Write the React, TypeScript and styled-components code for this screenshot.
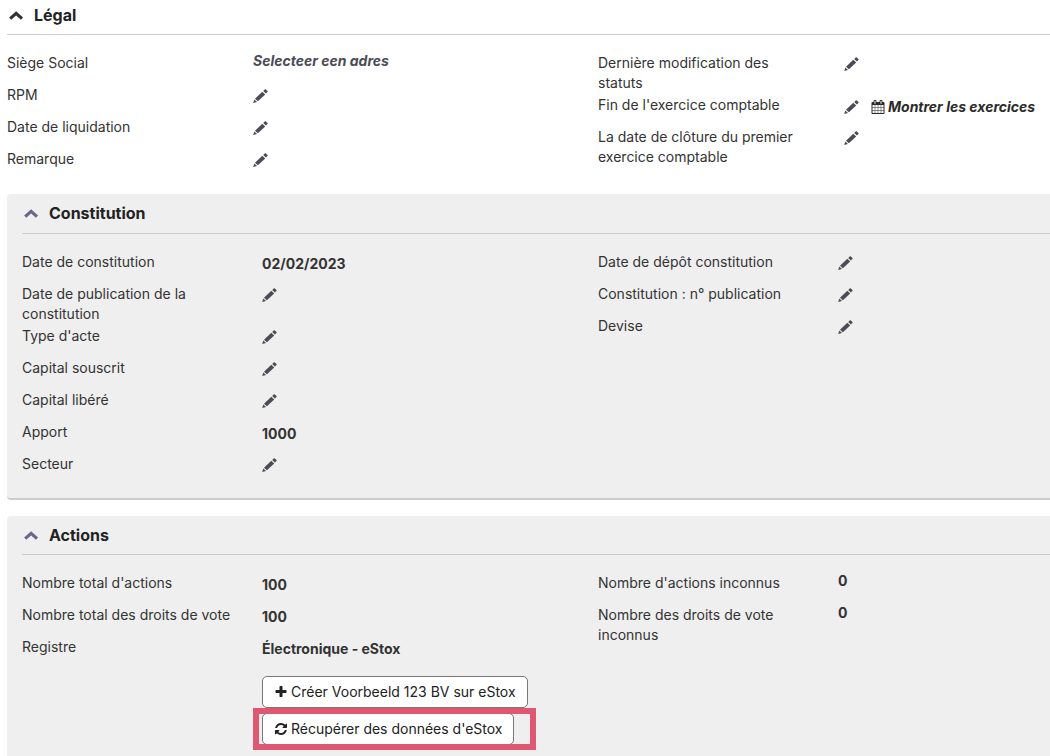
import React from "react";
import styled, { createGlobalStyle } from "styled-components";

const GlobalStyle = createGlobalStyle`
  * { box-sizing: border-box; }
  body {
    margin: 0;
    background: #fff;
    color: #333;
    font-family: Inter, "Liberation Sans", sans-serif;
    font-size: 14px;
    line-height: 20px;
  }
  button { font: inherit; color: inherit; cursor: pointer; }
`;

const Page = styled.main`
  display: flex;
  flex-direction: column;
  min-height: 100vh;
  padding-left: 7px;
  overflow-x: hidden;
`;

const LegalSection = styled.section`
  padding-bottom: 13px;
`;

const Panel = styled.section<{ $last?: boolean }>`
  padding: 0 0 12px 15px;
  background: #efefef;
  border-radius: 4px 0 0 4px;
  ${(p) =>
    p.$last
      ? "flex: 1; padding-bottom: 8px; border-bottom-left-radius: 0;"
      : "border-bottom: 2px solid #ccc; margin-bottom: 16px;"}
`;

const Header = styled.h2<{ $height: number; $plain?: boolean }>`
  display: flex;
  align-items: center;
  height: ${(p) => p.$height}px;
  margin: 0 0 18px;
  padding-bottom: ${(p) => (p.$plain ? 5 : 1)}px;
  border-bottom: 1px solid #ccc;
  font-size: 16px;
  font-weight: 700;
  line-height: 20px;
  color: #222;
`;

const Toggle = styled.button<{ $tone: string }>`
  display: flex;
  align-items: center;
  gap: 10px;
  padding: 0 1px;
  border: 0;
  background: none;
  svg { color: ${(p) => p.$tone}; }
`;

const Columns = styled.div<{ $left: number }>`
  display: grid;
  grid-template-columns: ${(p) => p.$left}fr 452fr;
`;

const Fields = styled.dl<{ $label: number }>`
  display: grid;
  grid-template-columns: ${(p) => p.$label}px 1fr;
  grid-auto-rows: min-content;
  margin: 0;
`;

const Label = styled.dt`
  min-height: 32px;
  padding: 0 30px 2px 0;
`;

const Value = styled.dd<{ $raised?: boolean }>`
  display: flex;
  flex-direction: column;
  align-items: flex-start;
  margin: 0;
  padding-top: ${(p) => (p.$raised ? 0 : 2)}px;
  line-height: ${(p) => (p.$raised ? 16 : 20)}px;
  font-weight: 700;
  white-space: nowrap;
`;

const Inline = styled.div`
  display: flex;
  align-items: center;
  gap: 12px;
`;

const EditButton = styled.button`
  display: flex;
  align-items: center;
  height: 18px;
  padding: 0;
  border: 0;
  background: none;
  color: #4b4c55;
`;

const TextLink = styled.a<{ $muted?: boolean }>`
  display: flex;
  align-items: center;
  gap: 3px;
  color: ${(p) => (p.$muted ? "#4b4c55" : "#2b2b2b")};
  font-style: italic;
  font-weight: 700;
  text-decoration: none;
`;

const Actions = styled.div`
  display: flex;
  flex-direction: column;
  align-items: flex-start;
  gap: 5px;
  margin-top: 17px;
`;

const ActionButton = styled.button`
  display: flex;
  align-items: center;
  gap: 3px;
  height: 32px;
  padding: 0 11px;
  border: 1px solid #777;
  border-radius: 5px;
  background: #fff;
  color: #222;
  font-weight: 400;
  white-space: nowrap;
`;

const Highlight = styled.div`
  position: relative;
  &::after {
    content: "";
    position: absolute;
    inset: -5px -22px -5px -9px;
    border: 6px solid #dd5870;
    pointer-events: none;
  }
`;

const Chevron = () => (
  <svg width="16" height="12" viewBox="0 0 16 12" aria-hidden="true">
    <path d="M2.200 9.600 8.100 4.300l5.900 5.300" fill="none" stroke="currentColor" strokeWidth="3.200" />
  </svg>
);

const Pencil = () => (
  <svg width="15" height="14" viewBox="0 0 15 14" fill="currentColor" aria-hidden="true">
    <path d="M.2 13.900 1.300 10.500 4 13ZM2 9.700 9.300 2.800 12.200 5.400 4.900 12.300ZM10.200 2 11.700.500Q12.300 0 12.900.500L14.400 1.900Q15 2.500 14.400 3.100L12.900 4.500Z" />
  </svg>
);

const glyphs = {
  plus: "M1600 736v192q0 40-28 68t-68 28h-416v416q0 40-28 68t-68 28h-192q-40 0-68-28t-28-68v-416h-416q-40 0-68-28t-28-68v-192q0-40 28-68t68-28h416v-416q0-40 28-68t68-28h192q40 0 68 28t28 68v416h416q40 0 68 28t28 68z",
  refresh:
    "M1639 1056q0 5-1 7-64 268-268 434.5t-478 166.5q-146 0-282.5-55t-243.5-157l-129 129q-19 19-45 19t-45-19-19-45v-448q0-26 19-45t45-19h448q26 0 45 19t19 45-19 45l-137 137q71 66 161 102t187 36q134 0 250-65t186-179q11-17 53-117 8-23 30-23h192q13 0 22.5 9.5t9.5 22.5zm25-800v448q0 26-19 45t-45 19h-448q-26 0-45-19t-19-45 19-45l138-138q-148-137-349-137-134 0-250 65t-186 179q-11 17-53 117-8 23-30 23h-199q-13 0-22.5-9.5t-9.5-22.5v-7q65-268 270-434.5t480-166.5q146 0 284 55.5t245 156.5l130-129q19-19 45-19t45 19 19 45z",
  calendar:
    "M192 1664h288v-288h-288v288zm352 0h320v-288h-320v288zm-352-352h288v-320h-288v320zm352 0h320v-320h-320v320zm-352-384h288v-288h-288v288zm736 736h320v-288h-320v288zm-384-736h320v-288h-320v288zm768 736h288v-288h-288v288zm-384-352h320v-320h-320v320zm-352-864v-288q0-13-9.5-22.5t-22.5-9.5h-64q-13 0-22.5 9.5t-9.5 22.5v288q0 13 9.5 22.5t22.5 9.5h64q13 0 22.5-9.5t9.5-22.5zm736 864h288v-320h-288v320zm-384-384h320v-288h-320v288zm384 0h288v-288h-288v288zm32-480v-288q0-13-9.5-22.5t-22.5-9.5h-64q-13 0-22.5 9.5t-9.5 22.5v288q0 13 9.5 22.5t22.5 9.5h64q13 0 22.5-9.5t9.5-22.5zm384-64v1280q0 52-38 90t-90 38h-1408q-52 0-90-38t-38-90v-1280q0-52 38-90t90-38h128v-96q0-66 47-113t113-47h64q66 0 113 47t47 113v96h384v-96q0-66 47-113t113-47h64q66 0 113 47t47 113v96h128q52 0 90 38t38 90z",
};

const Glyph = ({ name, size = 14 }: { name: keyof typeof glyphs; size?: number }) => (
  <svg width={size} height={size} viewBox="0 0 1792 1792" fill="currentColor" aria-hidden="true">
    <path d={glyphs[name]} />
  </svg>
);

type SectionHeaderProps = { title: string; height: number; plain?: boolean };

const SectionHeader = ({ title, height, plain }: SectionHeaderProps) => (
  <Header $height={height} $plain={plain}>
    <Toggle type="button" aria-expanded="true" $tone={plain ? "#333" : "#69668a"}>
      <Chevron />
      {title}
    </Toggle>
  </Header>
);

type FieldProps = { label: string; raised?: boolean; children?: React.ReactNode };

const Edit = ({ label }: { label: string }) => (
  <EditButton type="button" aria-label={`Modifier ${label}`}>
    <Pencil />
  </EditButton>
);

const Field = ({ label, raised, children }: FieldProps) => (
  <>
    <Label>{label}</Label>
    <Value $raised={raised}>{children ?? <Edit label={label} />}</Value>
  </>
);

export default function App() {
  return (
    <>
      <GlobalStyle />
      <Page>
        <LegalSection>
          <SectionHeader title="Légal" height={35} plain />
          <Columns $left={591}>
            <Fields $label={246}>
              <Field label="Siège Social" raised>
                <TextLink href="#adres" $muted>Selecteer een adres</TextLink>
              </Field>
              <Field label="RPM" />
              <Field label="Date de liquidation" />
              <Field label="Remarque" />
            </Fields>
            <Fields $label={246}>
              <Field label="Dernière modification des statuts" />
              <Field label="Fin de l'exercice comptable">
                <Inline>
                  <Edit label="Fin de l'exercice comptable" />
                  <TextLink href="#exercices">
                    <Glyph name="calendar" />
                    Montrer les exercices
                  </TextLink>
                </Inline>
              </Field>
              <Field label="La date de clôture du premier exercice comptable" />
            </Fields>
          </Columns>
        </LegalSection>

        <Panel>
          <SectionHeader title="Constitution" height={40} />
          <Columns $left={576}>
            <Fields $label={240}>
              <Field label="Date de constitution">02/02/2023</Field>
              <Field label="Date de publication de la constitution" />
              <Field label="Type d'acte" />
              <Field label="Capital souscrit" />
              <Field label="Capital libéré" />
              <Field label="Apport">1000</Field>
              <Field label="Secteur" />
            </Fields>
            <Fields $label={240}>
              <Field label="Date de dépôt constitution" />
              <Field label="Constitution : n° publication" />
              <Field label="Devise" />
            </Fields>
          </Columns>
        </Panel>

        <Panel $last>
          <SectionHeader title="Actions" height={39} />
          <Columns $left={576}>
            <Fields $label={240}>
              <Field label="Nombre total d'actions">100</Field>
              <Field label="Nombre total des droits de vote">100</Field>
              <Field label="Registre">
                Électronique - eStox
                <Actions>
                  <ActionButton type="button">
                    <Glyph name="plus" />
                    Créer Voorbeeld 123 BV sur eStox
                  </ActionButton>
                  <Highlight>
                    <ActionButton type="button">
                      <Glyph name="refresh" />
                      Récupérer des données d'eStox
                    </ActionButton>
                  </Highlight>
                </Actions>
              </Field>
            </Fields>
            <Fields $label={240}>
              <Field label="Nombre d'actions inconnus" raised>0</Field>
              <Field label="Nombre des droits de vote inconnus" raised>0</Field>
            </Fields>
          </Columns>
        </Panel>
      </Page>
    </>
  );
}
